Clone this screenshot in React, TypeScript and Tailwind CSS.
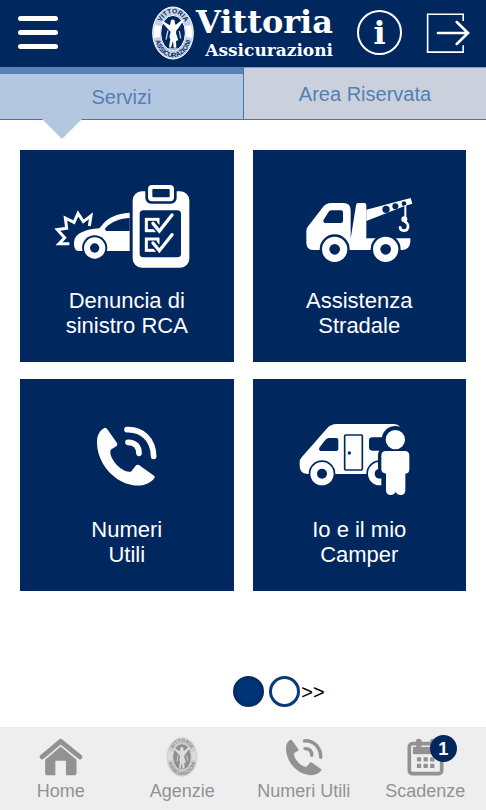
import React, { useState } from "react";

const NAVY = "#00285f";

interface SealProps {
  id: string;
  ring: string;
  ink: string;
  figure: string;
  className?: string;
}

const Seal: React.FC<SealProps> = ({ id, ring, ink, figure, className }) => (
  <svg viewBox="0 0 126 160" className={className} overflow="visible" aria-hidden="true">
    <defs>
      <path id={`${id}-top`} d="M20 80A43 59 0 0 1 106 80" />
      <path id={`${id}-bottom`} d="M7 80A56 73 0 0 0 119 80" />
    </defs>
    <ellipse cx="63" cy="80" rx="61" ry="78" fill={ring} stroke={figure} strokeWidth="3" />
    <ellipse cx="63" cy="80" rx="37" ry="53" fill={ink} stroke={figure} strokeWidth="3" />
    <path d="M9 56Q3 76 6 94L24 92Q22 76 27 60ZM117 56Q123 76 120 94L102 92Q104 76 99 60Z" fill={figure} />
    <g fill={ink} fontFamily="Liberation Sans, sans-serif" fontWeight="700" fontSize="20">
      <text textAnchor="middle">
        <textPath href={`#${id}-top`} startOffset="50%">VITTORIA</textPath>
      </text>
      <text textAnchor="middle">
        <textPath href={`#${id}-bottom`} startOffset="50%">ASSICURAZIONI</textPath>
      </text>
    </g>
    {/* winged figure */}
    <path
      d="M33 44L53 57Q57 50 56 44Q62 36 68 43Q68 51 71 56L90 40L95 42L78 67Q70 72 73 84L79 102L72 104L73 124L65 124L63 103L57 124L51 123L55 98L52 92L56 76Q44 64 31 49Z"
      fill={figure}
    />
    <path d="M48 72L42 100M82 74L86 96M48 128H80" stroke={ring} strokeWidth="4" fill="none" />
  </svg>
);

const PhoneShape = () => (
  <>
    <path
      d="M253 147C243 152 236 161 232 175C226 215 245 265 285 295C310 315 345 324 370 318C386 314 398 305 404 296Q405 292 402 290L357 258Q351 255 347 260L333 278C318 282 292 264 281 246C272 232 269 222 272 212L290 201Q294 197 291 192L262 151Q258 145 253 147Z"
      fill="currentColor"
    />
    <path
      d="M321 152C367 150 400 182 401 232M324 190C346 190 357 203 357 223"
      fill="none"
      stroke="currentColor"
      strokeWidth="17"
      strokeLinecap="round"
    />
  </>
);

const Wheel: React.FC<{ x: number; y: number; gap: number; r: number; hub: number }> = ({ x, y, gap, r, hub }) => (
  <>
    <circle cx={x} cy={y} r={gap} fill={NAVY} />
    <circle cx={x} cy={y} r={r} fill="#fff" />
    <circle cx={x} cy={y} r={hub} fill={NAVY} />
  </>
);

const AccidentShape = () => (
  <>
    <path
      d="M148 281H117L134 263L112 239L140 235L136 204L162 217L174 190L190 215L213 197L208 228"
      fill="none"
      stroke="#fff"
      strokeWidth="9"
    />
    <path
      d="M329 188C290 190 264 203 247 224L238 235C196 238 164 250 162 276C161 293 166 303 177 303H329Z"
      fill="#fff"
    />
    <path d="M329 204C302 205 274 215 257 233C253 239 256 243 264 243H329Z" fill={NAVY} />
    <Wheel x={224} y={294} gap={38} r={32} hub={14} />
    <rect x="338" y="124" width="170" height="229" rx="27" fill="#fff" />
    <rect x="376" y="97" width="94" height="64" rx="17" fill={NAVY} />
    <rect x="384" y="105" width="78" height="49" rx="12" fill="#fff" />
    <rect x="397" y="117" width="52" height="25" rx="3" fill={NAVY} />
    <rect x="359" y="181" width="124" height="141" rx="11" fill={NAVY} />
    {[0, 59].map((dy) => (
      <g key={dy} transform={`translate(0 ${dy})`} fill="none">
        <rect x="379" y="208" width="35" height="34" stroke="#fff" strokeWidth="9" />
        <path d="M400 220L418 242L456 194" stroke={NAVY} strokeWidth="21" />
        <path d="M399 220L418 243L456 195" stroke="#fff" strokeWidth="10" strokeLinecap="round" />
      </g>
    ))}
  </>
);

const TowTruckShape = () => (
  <>
    <path
      d="M163 242Q163 234 169 228L213 171Q222 159 238 159H274Q296 159 296 181V266L312 166Q313 159 319 159H337Q343 159 343 166V265H475V276Q472 300 450 300H185Q163 300 163 278Z"
      fill="#fff"
    />
    <path d="M239 181H267Q273 181 273 187V212Q273 219 267 219H221Q211 218 215 209L228 188Q232 181 239 181Z" fill={NAVY} />
    <path d="M343 179L476 144L481 161L458 168L343 213Z" fill="#fff" />
    <circle cx="402" cy="178" r="11" fill={NAVY} />
    <circle cx="430" cy="169" r="9" fill={NAVY} />
    <circle cx="456" cy="161" r="7" fill={NAVY} />
    <path d="M460 165V204" stroke="#fff" strokeWidth="6" />
    <circle cx="457" cy="208" r="9" fill="#fff" />
    <path d="M457 214C474 222 470 242 455 242C447 242 444 237 444 229" fill="none" stroke="#fff" strokeWidth="8" />
    <Wheel x={248} y={298} gap={45} r={38} hub={16} />
    <Wheel x={401} y={298} gap={45} r={38} hub={16} />
  </>
);

const CamperShape = () => (
  <>
    <path
      d="M143 250Q143 241 149 235L224 149Q236 135 254 135H426Q438 135 444 143L400 215V285H166Q143 283 143 260Z"
      fill="#fff"
    />
    <path d="M230 177H253Q259 177 259 184V209Q259 216 253 216H206Q198 214 203 205L218 185Q223 177 230 177Z" fill={NAVY} />
    <rect x="278" y="168" width="53" height="105" rx="3" fill="none" stroke={NAVY} strokeWidth="5" />
    <circle cx="292" cy="222" r="5" fill={NAVY} />
    <rect x="351" y="175" width="70" height="40" rx="10" fill={NAVY} />
    <Wheel x={210} y={284} gap={40} r={35} hub={15} />
    <Wheel x={383} y={284} gap={40} r={35} hub={15} />
    <circle cx="430" cy="182" r="41" fill={NAVY} />
    <rect x="378" y="207" width="103" height="78" rx="20" fill={NAVY} />
    <rect x="388" y="250" width="90" height="104" fill={NAVY} />
    <circle cx="430" cy="182" r="29" fill="#fff" />
    <path
      d="M402 216H458Q472 216 472 230V270Q472 284 460 284V334Q460 348 446 348Q436 348 431 339Q426 348 416 348Q402 348 402 334V284Q388 282 388 270V230Q388 216 402 216Z"
      fill="#fff"
    />
  </>
);

const HomeIcon = () => (
  <svg viewBox="116 55 132 115" className="h-[38px] w-[44px]" aria-hidden="true">
    <path d="M125 112L181 65L239 112" fill="none" stroke="currentColor" strokeWidth="15" strokeLinecap="round" strokeLinejoin="round" />
    <path d="M134 121L181 81L229 121V160Q229 168 221 168H197V124H165V168H142Q134 168 134 160Z" fill="currentColor" />
  </svg>
);

const CalendarIcon = () => (
  <svg viewBox="490 55 112 115" className="h-[38px] w-[37px]" aria-hidden="true">
    <rect x="497" y="72" width="98" height="91" rx="10" fill="none" stroke="currentColor" strokeWidth="11" />
    <rect x="508" y="82" width="76" height="22" fill="currentColor" />
    <rect x="517" y="57" width="17" height="27" rx="8" fill="currentColor" />
    <rect x="560" y="57" width="17" height="27" rx="8" fill="currentColor" />
    {[113, 133].map((y) =>
      [520, 540, 560].map((x) => <rect key={`${x}-${y}`} x={x} y={y} width="13" height="13" rx="2" fill="currentColor" />)
    )}
  </svg>
);

const SERVICES = [
  { lines: ["Denuncia di", "sinistro RCA"], shape: <AccidentShape /> },
  { lines: ["Assistenza", "Stradale"], shape: <TowTruckShape /> },
  { lines: ["Numeri", "Utili"], shape: <PhoneShape /> },
  { lines: ["Io e il mio", "Camper"], shape: <CamperShape /> },
];

const NAV_ITEMS = [
  { label: "Home", icon: <HomeIcon /> },
  {
    label: "Agenzie",
    icon: <Seal id="nav-seal" ring="#cbcbcb" ink="#8f8f8f" figure="#dcdcdc" className="h-[40px] w-[32px]" />,
  },
  {
    label: "Numeri Utili",
    icon: (
      <svg viewBox="226 140 186 182" className="h-[38px] w-[38px]" aria-hidden="true">
        <PhoneShape />
      </svg>
    ),
  },
  { label: "Scadenze", icon: <CalendarIcon />, badge: 1 },
];

const Header = () => (
  <header className="flex h-[67px] items-center justify-between bg-[#00285f] pr-4 pb-0.5 pl-[18px] text-white">
    <button type="button" aria-label="Menu" className="flex w-10 flex-col gap-[9px]">
      <span className="h-[5px] rounded-full bg-white" />
      <span className="h-[5px] rounded-full bg-white" />
      <span className="h-[5px] rounded-full bg-white" />
    </button>
    <div className="flex items-center gap-6">
      <div className="flex items-center gap-0.5">
        <Seal id="logo-seal" ring="#c3d2e8" ink={NAVY} figure="#ffffff" className="h-[54px] w-[42px]" />
        <div className="flex flex-col items-end font-['DejaVu_Serif',serif] font-bold">
          <span className="text-[32px] leading-[34px]">Vittoria</span>
          <span className="text-[17px] leading-[22px]">Assicurazioni</span>
        </div>
      </div>
      <div className="flex items-center gap-6">
        <button
          type="button"
          aria-label="Informazioni"
          className="flex size-[45px] items-center justify-center rounded-full border-2 border-white font-['DejaVu_Serif',serif] text-[32px] leading-8 font-bold"
        >
          i
        </button>
        <button type="button" aria-label="Esci">
          <svg viewBox="547 34 136 126" className="h-[42px] w-[44px]" fill="none" stroke="currentColor" aria-hidden="true">
            <path d="M662 60V39H552V156H662V135" strokeWidth="5" />
            <path d="M584 97H675M642 63L677 97L642 131" strokeWidth="8" strokeLinecap="round" />
          </svg>
        </button>
      </div>
    </div>
  </header>
);

export default function App() {
  const [tab, setTab] = useState("servizi");

  return (
    <div className="flex min-h-screen flex-col bg-white font-['Liberation_Sans',Arial,sans-serif]">
      <Header />

      <div role="tablist" className="grid h-[53px] grid-cols-2 text-xl text-[#527fb5]">
        <button
          type="button"
          role="tab"
          aria-selected={tab === "servizi"}
          onClick={() => setTab("servizi")}
          className="relative border-t-[7px] border-b border-t-[#5981b3] border-b-[#4674ad] bg-[#b4c7e0]"
        >
          Servizi
          <span className="absolute top-full left-[42px] border-x-20 border-t-20 border-x-transparent border-t-[#b4c7e0]" />
        </button>
        <button
          type="button"
          role="tab"
          aria-selected={tab === "riservata"}
          onClick={() => setTab("riservata")}
          className="border-y border-l border-[#4674ad] border-t-[#7f9fca] bg-[#cad1dc]"
        >
          Area Riservata
        </button>
      </div>

      <main className="flex flex-1 flex-col">
        <div className="grid grid-cols-2 gap-x-[19px] gap-y-[17px] px-5 pt-[30px]">
          {SERVICES.map((s) => (
            <button
              key={s.lines.join(" ")}
              type="button"
              className="flex h-[212px] flex-col items-center bg-[#00285f] pt-[30px] text-[22px] leading-[25px] text-white"
            >
              <svg viewBox="96 90 450 270" className="h-[90px] w-[150px]" aria-hidden="true">
                {s.shape}
              </svg>
              <span className="mt-[18px]">
                {s.lines[0]}
                <br />
                {s.lines[1]}
              </span>
            </button>
          ))}
        </div>

        <div className="mt-auto flex items-center pb-5 pl-[48%]">
          <button type="button" aria-label="Pagina 1" className="size-[31px] rounded-full border-3 border-[#062c63] bg-[#003478]" />
          <button type="button" aria-label="Pagina 2" className="ml-[5px] size-[31px] rounded-full border-3 border-[#0b3a7c] bg-white" />
          <button type="button" aria-label="Pagina successiva" className="ml-px text-xl leading-6 text-black">
            &gt;&gt;
          </button>
        </div>
      </main>

      <nav className="grid h-[83px] grid-cols-4 bg-[#eeeeee] text-lg leading-5 text-[#929292]">
        {NAV_ITEMS.map((item) => (
          <a key={item.label} href="#" className="flex flex-col items-center pt-2.5">
            <span className="relative flex h-10 items-center">
              {item.icon}
              {item.badge && (
                <span className="absolute -top-0.5 left-[23px] flex size-[27px] items-center justify-center rounded-full bg-[#00285f] text-lg font-bold text-white">
                  {item.badge}
                </span>
              )}
            </span>
            <span className="mt-1">{item.label}</span>
          </a>
        ))}
      </nav>
    </div>
  );
}
